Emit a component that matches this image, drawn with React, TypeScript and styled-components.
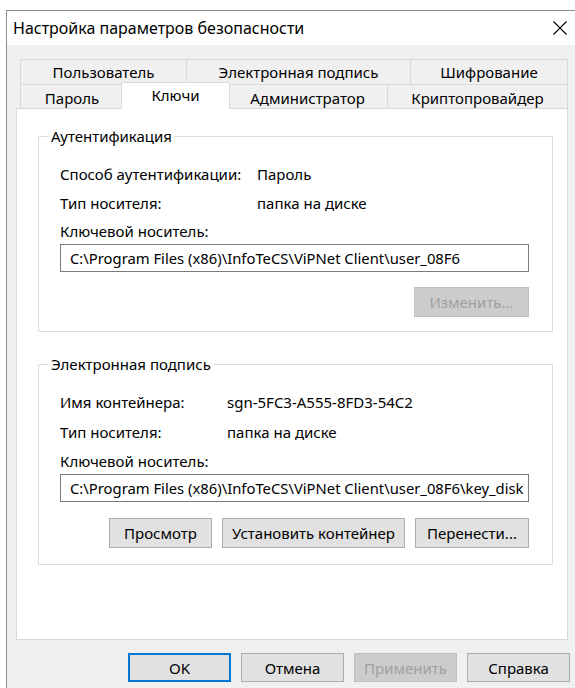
import React from 'react';
import styled, { createGlobalStyle } from 'styled-components';

const GlobalStyle = createGlobalStyle`
  html, body {
    margin: 0;
    padding: 0;
    background: #ffffff;
    overflow: hidden;
  }
  body {
    font-family: "Noto Sans", "Open Sans", sans-serif;
    font-size: 15px;
    color: #000000;
  }
  * { box-sizing: border-box; }
`;

const Window = styled.div`
  margin: 10px 0 0 6px;
  width: 572px;
  height: 679px;
  border: 1px solid #8c8c8c;
  background: #f0f0f0;
`;

const TitleBar = styled.div`
  height: 34px;
  background: #ffffff;
  display: flex;
  align-items: center;
  justify-content: space-between;
  padding: 0 10px 0 6px;
`;

const Title = styled.span`
  font-size: 16px;
  line-height: 20px;
`;

const CloseButton = styled.button`
  border: none;
  background: transparent;
  padding: 0;
  width: 14px;
  height: 14px;
  display: flex;
  cursor: default;
`;

const Body = styled.div`
  width: 554px;
  margin-left: 9px;
  padding-top: 14px;
`;

const TabRow = styled.div<{ $h: number }>`
  display: flex;
  align-items: flex-start;
  margin-left: 4px;
  height: ${p => p.$h}px;
`;

const Tab = styled.div<{ $w: number; $h: number; $first?: boolean; $pad: number }>`
  width: ${p => p.$w}px;
  height: ${p => p.$h}px;
  margin-left: ${p => (p.$first ? 0 : -1)}px;
  border: 1px solid #d9d9d9;
  border-bottom: none;
  background: #f0f0f0;
  display: flex;
  justify-content: center;
  padding-top: ${p => p.$pad}px;
  line-height: 20px;
  white-space: nowrap;
`;

const ActiveTab = styled.div<{ $w: number }>`
  position: relative;
  z-index: 2;
  width: ${p => p.$w + 4}px;
  height: 27px;
  margin: -2px -2px 0 -3px;
  border: 1px solid #d9d9d9;
  border-bottom: none;
  background: #ffffff;
  display: flex;
  justify-content: center;
  padding-top: 2px;
  line-height: 20px;
`;

const Panel = styled.div`
  width: 552px;
  height: 532px;
  border: 1px solid #d9d9d9;
  background: #ffffff;
  padding: 27px 0 0 21px;
`;

const Group = styled.section<{ $padB: number; $top?: number }>`
  width: 515px;
  margin-top: ${p => p.$top ?? 0}px;
  border: 1px solid #dcdcdc;
  padding: 0 23px ${p => p.$padB}px 21px;
  display: flex;
  flex-direction: column;
`;

const Caption = styled.span`
  align-self: flex-start;
  margin: -11px 0 13px -11px;
  padding: 0 2px;
  background: #ffffff;
  line-height: 20px;
`;

const InfoRow = styled.div<{ $h: number; $col: number }>`
  display: grid;
  grid-template-columns: ${p => p.$col}px 1fr;
  align-items: center;
  height: ${p => p.$h}px;
  white-space: nowrap;
`;

const FieldLabel = styled.div`
  height: 27px;
  display: flex;
  align-items: center;
`;

const PathField = styled.input`
  width: 100%;
  height: 28px;
  border: 1px solid #7a7a7a;
  background: #ffffff;
  padding: 0 4px 0 9px;
  font-family: inherit;
  font-size: 14.8px;
  color: #000000;
  outline: none;
`;

const ButtonRow = styled.div<{ $top: number; $gap: number }>`
  display: flex;
  justify-content: flex-end;
  gap: ${p => p.$gap}px;
  margin-top: ${p => p.$top}px;
`;

const Button = styled.button<{ $w: number; $h?: number; $default?: boolean }>`
  width: ${p => p.$w}px;
  height: ${p => p.$h ?? 30}px;
  font: inherit;
  color: #000000;
  background: #e1e1e1;
  border: ${p => (p.$default ? '2px solid #0078d7' : '1px solid #adadad')};
  padding: 0;
  white-space: nowrap;
  cursor: default;

  &:disabled {
    color: #a0a0a0;
    background: #cccccc;
    border-color: #bfbfbf;
  }
`;

const topTabs = [
  { label: 'Пользователь', w: 167 },
  { label: 'Электронная подпись', w: 225 },
  { label: 'Шифрование', w: 158 },
];

const bottomTabs = [
  { label: 'Пароль', w: 104 },
  { label: 'Ключи', w: 105, active: true },
  { label: 'Администратор', w: 161 },
  { label: 'Криптопровайдер', w: 181 },
];

const keyPath = 'C:\\Program Files (x86)\\InfoTeCS\\ViPNet Client\\user_08F6';

export default function App() {
  return (
    <>
      <GlobalStyle />
      <Window>
        <TitleBar>
          <Title>Настройка параметров безопасности</Title>
          <CloseButton aria-label="Закрыть">
            <svg width="14" height="14" viewBox="0 0 14 14">
              <path d="M0.5 0.5 L13.5 13.5 M13.5 0.5 L0.5 13.5" stroke="#000" strokeWidth="1.1" fill="none" />
            </svg>
          </CloseButton>
        </TitleBar>

        <Body>
          <TabRow $h={25}>
            {topTabs.map((t, i) => (
              <Tab key={t.label} $w={t.w} $h={25} $pad={2} $first={i === 0}>{t.label}</Tab>
            ))}
          </TabRow>
          <TabRow $h={24}>
            {bottomTabs.map((t, i) =>
              t.active ? (
                <ActiveTab key={t.label} $w={t.w}>{t.label}</ActiveTab>
              ) : (
                <Tab key={t.label} $w={t.w} $h={24} $pad={3} $first={i === 0}>{t.label}</Tab>
              )
            )}
          </TabRow>

          <Panel>
            <Group $padB={14}>
              <Caption>Аутентификация</Caption>
              <InfoRow $h={29} $col={197}>
                <span>Способ аутентификации:</span>
                <span>Пароль</span>
              </InfoRow>
              <InfoRow $h={29} $col={197}>
                <span>Тип носителя:</span>
                <span>папка на диске</span>
              </InfoRow>
              <FieldLabel>Ключевой носитель:</FieldLabel>
              <PathField readOnly value={keyPath} />
              <ButtonRow $top={15} $gap={10}>
                <Button $w={115} disabled>Изменить...</Button>
              </ButtonRow>
            </Group>

            <Group $padB={16} $top={32}>
              <Caption>Электронная подпись</Caption>
              <InfoRow $h={30} $col={167}>
                <span>Имя контейнера:</span>
                <span>sgn-5FC3-A555-8FD3-54C2</span>
              </InfoRow>
              <InfoRow $h={30} $col={167}>
                <span>Тип носителя:</span>
                <span>папка на диске</span>
              </InfoRow>
              <FieldLabel>Ключевой носитель:</FieldLabel>
              <PathField readOnly value={keyPath + '\\key_disk\\sgn'} />
              <ButtonRow $top={16} $gap={10}>
                <Button $w={103}>Просмотр</Button>
                <Button $w={183}>Установить контейнер</Button>
                <Button $w={114}>Перенести...</Button>
              </ButtonRow>
            </Group>
          </Panel>

          <ButtonRow $top={13} $gap={10}>
            <Button $w={103} $h={29} $default>OK</Button>
            <Button $w={103} $h={29}>Отмена</Button>
            <Button $w={103} $h={29} disabled>Применить</Button>
            <Button $w={103} $h={29}>Справка</Button>
          </ButtonRow>
        </Body>
      </Window>
    </>
  );
}
